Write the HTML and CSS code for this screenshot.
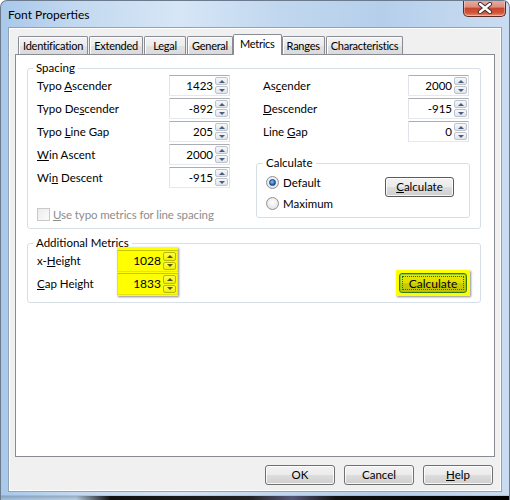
FILE: index.html
```html
<!DOCTYPE html>
<html>
<head>
<meta charset="utf-8">
<title>Font Properties</title>
<link rel="stylesheet" href="styles.css">
</head>
<body>
<div class="window">
  <div class="titlebar">
    <span class="title">Font Properties</span>
    <div class="close">
      <svg width="16" height="12" viewBox="0 0 16 12">
        <path d="M3 2 L13 10 M13 2 L3 10" stroke="#3a2a35" stroke-width="4.2" stroke-linecap="round"/>
        <path d="M3 2 L13 10 M13 2 L3 10" stroke="#ffffff" stroke-width="2.4" stroke-linecap="round"/>
      </svg>
    </div>
  </div>
  <div class="client">
    <div class="tabs">
      <div class="tab">Identification</div>
      <div class="tab">Extended</div>
      <div class="tab">Legal</div>
      <div class="tab">General</div>
      <div class="tab active">Metrics</div>
      <div class="tab">Ranges</div>
      <div class="tab">Characteristics</div>
    </div>
    <div class="panel">
      <fieldset class="group spacing">
        <legend>Spacing</legend>
        <div class="cols">
          <div class="col col-left">
            <div class="rows">
              <div class="row"><span class="lbl">Typo <u>A</u>scender</span><div class="spin"><span class="val">1423</span><span class="arrows"><i class="up"></i><i class="down"></i></span></div></div>
              <div class="row"><span class="lbl">Typo De<u>s</u>cender</span><div class="spin"><span class="val">-892</span><span class="arrows"><i class="up"></i><i class="down"></i></span></div></div>
              <div class="row"><span class="lbl">Typo <u>L</u>ine Gap</span><div class="spin"><span class="val">205</span><span class="arrows"><i class="up"></i><i class="down"></i></span></div></div>
              <div class="row"><span class="lbl"><u>W</u>in Ascent</span><div class="spin"><span class="val">2000</span><span class="arrows"><i class="up"></i><i class="down"></i></span></div></div>
              <div class="row"><span class="lbl">Wi<u>n</u> Descent</span><div class="spin"><span class="val">-915</span><span class="arrows"><i class="up"></i><i class="down"></i></span></div></div>
            </div>
            <div class="check"><span class="cbox"></span><span class="ctext"><u>U</u>se typo metrics for line spacing</span></div>
          </div>
          <div class="col col-right">
            <div class="rows rows-right">
              <div class="row"><span class="lbl">As<u>c</u>ender</span><div class="spin"><span class="val">2000</span><span class="arrows"><i class="up"></i><i class="down"></i></span></div></div>
              <div class="row"><span class="lbl"><u>D</u>escender</span><div class="spin"><span class="val">-915</span><span class="arrows"><i class="up"></i><i class="down"></i></span></div></div>
              <div class="row"><span class="lbl">Line <u>G</u>ap</span><div class="spin"><span class="val">0</span><span class="arrows"><i class="up"></i><i class="down"></i></span></div></div>
            </div>
            <fieldset class="group calc">
              <legend>Calculate</legend>
              <div class="calc-body">
                <div class="radios">
                  <div class="radio"><span class="dot checked"></span>Default</div>
                  <div class="radio"><span class="dot"></span>Maximum</div>
                </div>
                <div class="btn btn-calc"><u>C</u>alculate</div>
              </div>
            </fieldset>
          </div>
        </div>
      </fieldset>
      <fieldset class="group additional">
        <legend>Additional Metrics</legend>
        <div class="add-body">
          <div class="add-left">
            <div class="add-labels">
              <span class="alabel">x-<u>H</u>eight</span>
              <span class="alabel"><u>C</u>ap Height</span>
            </div>
            <div class="hl">
              <div class="spin spin-hl"><span class="val">1028</span><span class="arrows"><i class="up"></i><i class="down"></i></span></div>
              <div class="spin spin-hl"><span class="val">1833</span><span class="arrows"><i class="up"></i><i class="down"></i></span></div>
            </div>
          </div>
          <div class="hl-btn"><div class="btn btn-yellow"><span class="focus">Calculate</span></div></div>
        </div>
      </fieldset>
    </div>
    <div class="buttons">
      <div class="btn btn-dlg">OK</div>
      <div class="btn btn-dlg">Cancel</div>
      <div class="btn btn-dlg"><u>H</u>elp</div>
    </div>
  </div>
</div>
</body>
</html>
```
FILE: styles.css
```css
html, body {
  margin: 0;
  padding: 0;
  background: #ffffff;
}
body {
  font-family: "Lato", "Open Sans", sans-serif;
  font-size: 11.5px;
  color: #000;
}
u { text-decoration: underline; text-underline-offset: 1px; }

.window {
  width: 510px;
  height: 500px;
  box-sizing: border-box;
  padding: 0 7px 8px 7px;
  border: 1px solid #6b7a8c;
  border-bottom: none;
  border-radius: 7px 7px 0 0;
  background:
    linear-gradient(to bottom, rgba(0,0,0,0) 494px, rgba(30,40,50,0.25) 495px, rgba(0,0,0,0) 500px),
    linear-gradient(to right, #a9c8ea 0%, #c3d9f0 15%, #d6e6f6 35%, #c1d7ef 55%, #b5cfeb 75%, #cadcf1 100%);
  display: flex;
  flex-direction: column;
  position: relative;
  overflow: hidden;
}
.window::after {
  content: "";
  position: absolute;
  left: 75px;
  right: 0;
  bottom: 0;
  height: 4px;
  background: linear-gradient(to right, rgba(0,0,0,0) 0%, #111 8%, #222 40%, #557 50%, #111 60%, #000 100%);
}

.titlebar {
  height: 26px;
  display: flex;
  justify-content: space-between;
  align-items: flex-start;
  flex: none;
}
.title {
  line-height: 27px;
  font-size: 12px;
}
.close {
  width: 43px;
  height: 17px;
  box-sizing: border-box;
  margin-right: -4px;
  margin-top: -1px;
  border: 1px solid #5e2a24;
  border-top: none;
  border-radius: 0 0 5px 5px;
  background: linear-gradient(#eab0a2 0%, #dc8d7c 45%, #c7452e 50%, #d0553a 80%, #e39577 100%);
  box-shadow: inset 0 0 0 1px rgba(255,255,255,0.35);
  display: flex;
  align-items: center;
  justify-content: center;
}

.client {
  flex: none;
  height: 465px;
  box-sizing: border-box;
  background: #f0f0f0;
  border: 1px solid #8ea2b8;
  box-shadow: inset 0 0 0 1px #ffffff;
  padding: 6px;
  display: flex;
  flex-direction: column;
}

.tabs {
  display: flex;
  align-items: flex-end;
  padding-left: 3px;
  gap: 1px;
  height: 20px;
  position: relative;
  z-index: 2;
}
.tab {
  height: 18px;
  box-sizing: border-box;
  min-width: 42px;
  text-align: center;
  padding: 0 4px;
  font-size: 11px;
  letter-spacing: -0.25px;
  line-height: 17px;
  border: 1px solid #898c95;
  border-bottom: none;
  border-radius: 2px 2px 0 0;
  background: linear-gradient(#f3f3f3 0%, #ececec 50%, #e2e2e2 51%, #dadada 100%);
  box-shadow: inset 1px 1px 0 #ffffff;
}
.tab.active {
  height: 21px;
  line-height: 18px;
  padding: 0 6px 2px 6px;
  margin: 0 -1px -1px -1px;
  background: #ffffff;
  box-shadow: none;
  position: relative;
}

.panel {
  flex: none;
  height: 403px;
  box-sizing: border-box;
  background: #ffffff;
  border: 1px solid #898c95;
  padding: 6px 13px 0 11px;
  display: flex;
  flex-direction: column;
  gap: 7px;
}

.group {
  margin: 0;
  border: 1px solid #d5dfe5;
  border-radius: 3px;
  box-shadow: inset 1px 1px 0 #ffffff;
  min-width: 0;
}
.group legend {
  padding: 0 3px;
  margin-left: -4px;
  line-height: 14px;
}
.spacing {
  padding: 0 10px 6px 9px;
}
.cols {
  display: flex;
  gap: 26px;
}
.col-left {
  width: 193px;
  flex: none;
}
.col-right {
  flex: 1;
  display: flex;
  flex-direction: column;
}
.rows {
  display: flex;
  flex-direction: column;
  gap: 2px;
}
.rows-right {
  padding: 0 1px 0 7px;
}
.row {
  height: 21px;
  display: flex;
  align-items: center;
  justify-content: space-between;
}

.spin {
  width: 61px;
  height: 21px;
  box-sizing: border-box;
  border: 1px solid;
  border-color: #abadb3 #dbdfe6 #e3e9ef #e2e3ea;
  background: #ffffff;
  padding: 1px;
  display: flex;
  border-radius: 1px;
}
.val {
  flex: 1;
  text-align: right;
  padding-right: 2px;
  line-height: 17px;
}
.arrows {
  width: 13px;
  display: flex;
  flex-direction: column;
  gap: 1px;
  flex: none;
}
.arrows i {
  flex: 1;
  box-sizing: border-box;
  border: 1px solid #bcc3cd;
  border-radius: 2px;
  background: linear-gradient(#f7f8fa, #e0e4ea);
  display: flex;
  align-items: center;
  justify-content: center;
}
.arrows .up::before {
  content: "";
  border-left: 3px solid transparent;
  border-right: 3px solid transparent;
  border-bottom: 3px solid #4b5d7e;
}
.arrows .down::before {
  content: "";
  border-left: 3px solid transparent;
  border-right: 3px solid transparent;
  border-top: 3px solid #4b5d7e;
}

.check {
  margin-top: 18px;
  height: 16px;
  display: flex;
  align-items: center;
  gap: 3px;
  color: #8d8d8d;
  letter-spacing: -0.1px;
}
.cbox {
  width: 13px;
  height: 13px;
  box-sizing: border-box;
  border: 1px solid #c9c9c9;
  background: linear-gradient(135deg, #ececec, #fbfbfb);
  flex: none;
}

.calc {
  margin-top: 14px;
  padding: 4px 15px 5px 9px;
}
.calc legend {
  margin-left: -3px;
}
.calc-body {
  display: flex;
  justify-content: space-between;
  align-items: flex-start;
}
.radios {
  display: flex;
  flex-direction: column;
  gap: 4px;
}
.radio {
  height: 17px;
  display: flex;
  align-items: center;
  gap: 4px;
}
.dot {
  width: 13px;
  height: 13px;
  box-sizing: border-box;
  border-radius: 50%;
  border: 1px solid #8e9096;
  background: radial-gradient(circle at 50% 40%, #ffffff 0%, #e6e6e6 70%, #d2d2d2 100%);
  display: flex;
  align-items: center;
  justify-content: center;
}
.dot.checked::after {
  content: "";
  width: 5px;
  height: 5px;
  border-radius: 50%;
  background: radial-gradient(circle at 40% 35%, #8fc0f0, #1d5fb8 70%, #123f86);
  border: 0.5px solid #173c72;
}

.btn {
  box-sizing: border-box;
  border: 1px solid #707070;
  border-radius: 3px;
  background: linear-gradient(#f2f2f2 0%, #ebebeb 50%, #dddddd 51%, #cfcfcf 100%);
  box-shadow: inset 0 0 0 1px rgba(255,255,255,0.8);
  text-align: center;
}
.btn-calc {
  width: 69px;
  height: 20px;
  line-height: 18px;
  margin-top: 3px;
  border-color: #5a5a5a;
}

.additional {
  padding: 0 10px 6px 9px;
}
.add-body {
  display: flex;
  justify-content: space-between;
  align-items: flex-end;
  margin-top: -3px;
}
.add-left {
  display: flex;
  align-items: flex-start;
}
.add-labels {
  width: 80px;
  display: flex;
  flex-direction: column;
  padding-top: 3px;
  gap: 1px;
}
.alabel {
  height: 22px;
  line-height: 22px;
}
.hl {
  background: #ffff00;
  display: flex;
  flex-direction: column;
  gap: 1px;
  padding: 3px 0 1px 0;
  box-shadow: 1px 1px 2px rgba(0,0,0,0.45);
}
.spin-hl {
  height: 22px;
  background: #ffff00;
  border-color: #c8c800 #e6e600 #e6e600 #e6e600;
}
.spin-hl .val {
  line-height: 18px;
  font-size: 12px;
}
.spin-hl .arrows i {
  border-color: #b8b800;
  background: linear-gradient(#ffff50, #f0f000);
}
.spin-hl .arrows .up::before { border-bottom-color: #55551a; }
.spin-hl .arrows .down::before { border-top-color: #55551a; }

.hl-btn {
  background: #ffff00;
  padding: 3px;
  box-shadow: 1px 1px 2px rgba(0,0,0,0.45);
}
.btn-yellow {
  width: 68px;
  height: 20px;
  border: 1px solid #2f7d1a;
  background: linear-gradient(#e9e900 0%, #dede00 50%, #cccc00 51%, #c4c400 100%);
  box-shadow: inset 0 0 0 1px #8ccc30;
  padding: 2px;
  display: flex;
}
.focus {
  flex: 1;
  border: 1px dotted #2a6a10;
  line-height: 13px;
  font-size: 12px;
}

.buttons {
  margin-top: 8px;
  padding-right: 2px;
  display: flex;
  justify-content: flex-end;
  gap: 9px;
}
.btn-dlg {
  width: 70px;
  height: 20px;
  line-height: 18px;
}
```
